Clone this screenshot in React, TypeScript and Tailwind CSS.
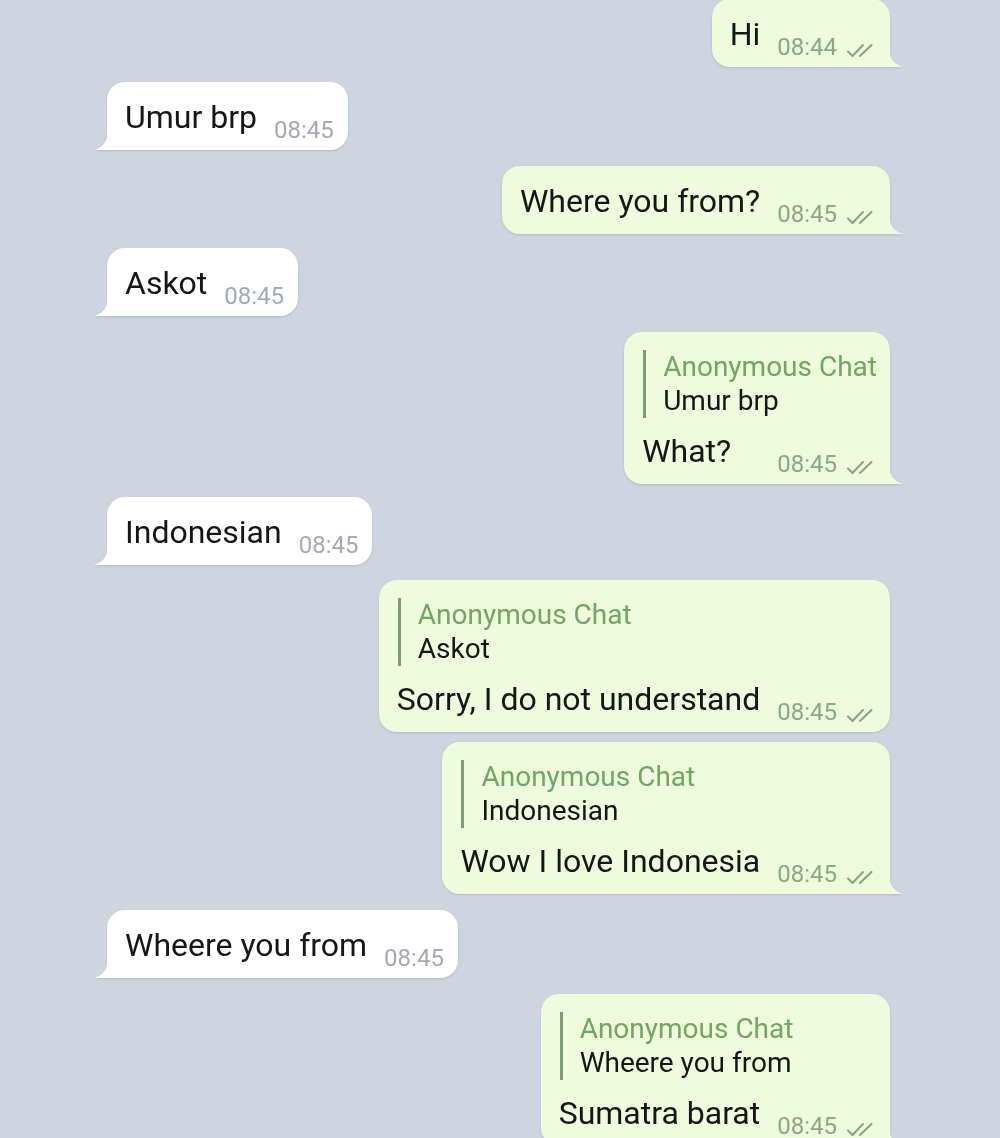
import React from 'react';

type Msg =
  | { id: number; out: boolean; text: string; time: string; mt: string; tail?: boolean; quote?: undefined }
  | { id: number; out: true; text: string; time: string; mt: string; tail?: boolean; quote: string };

const messages: Msg[] = [
  { id: 1, out: true, text: 'Hi', time: '08:44', mt: '-mt-[1px]' },
  { id: 2, out: false, text: 'Umur brp', time: '08:45', mt: 'mt-[15px]' },
  { id: 3, out: true, text: 'Where you from?', time: '08:45', mt: 'mt-[16px]' },
  { id: 4, out: false, text: 'Askot', time: '08:45', mt: 'mt-[14px]' },
  { id: 5, out: true, quote: 'Umur brp', text: 'What?', time: '08:45', mt: 'mt-[16px]' },
  { id: 6, out: false, text: 'Indonesian', time: '08:45', mt: 'mt-[13px]' },
  { id: 7, out: true, quote: 'Askot', text: 'Sorry, I do not understand', time: '08:45', mt: 'mt-[15px]', tail: false },
  { id: 8, out: true, quote: 'Indonesian', text: 'Wow I love Indonesia', time: '08:45', mt: 'mt-[10px]' },
  { id: 9, out: false, text: 'Wheere you from', time: '08:45', mt: 'mt-[16px]' },
  { id: 10, out: true, quote: 'Wheere you from', text: 'Sumatra barat', time: '08:45', mt: 'mt-[16px]' },
];

function Checks() {
  return (
    <svg width="31" height="16" viewBox="0 0 31 16" fill="none" stroke="#86a47f" strokeWidth="2" strokeLinecap="round" strokeLinejoin="round" className="ml-[9px] shrink-0">
      <path d="M2 8.5l4.5 4.5L17 2" />
      <path d="M14 13L25.5 2" />
    </svg>
  );
}

function Tail({ out }: { out: boolean }) {
  if (out) {
    return (
      <svg width="14" height="20" viewBox="0 0 14 20" className="absolute bottom-0 -right-[13px]">
        <path d="M0 0Q0 16 14 20H0Z" fill="#effbdd" />
      </svg>
    );
  }
  return (
    <svg width="14" height="20" viewBox="0 0 14 20" className="absolute bottom-0 -left-[13px]">
      <path d="M14 0Q14 16 0 20H14Z" fill="#ffffff" />
    </svg>
  );
}

function TimeStamp({ time, out }: { time: string; out: boolean }) {
  return (
    <div className="ml-[17px] flex shrink-0 translate-y-[10px] items-end">
      <span className={`text-[24px] leading-none ${out ? 'text-[#8aa883]' : 'text-[#a4aab1]'}`}>{time}</span>
      {out && <Checks />}
    </div>
  );
}

function Bubble({ msg }: { msg: Msg }) {
  const tail = msg.tail !== false;
  const corner = tail ? (msg.out ? 'rounded-br-none' : 'rounded-bl-none') : '';
  return (
    <div className={`relative w-fit rounded-[18px] ${corner} ${msg.out ? 'bg-[#effbdd]' : 'bg-white'} drop-shadow-[0_1px_1px_rgba(60,70,90,0.18)]`}>
      {tail && <Tail out={msg.out} />}
      {msg.quote ? (
        <div className="pl-[18px] pr-[13px] pt-[18px] pb-[14px]">
          <div className="ml-[1px] border-l-[3px] border-[#7f9c77] pl-[17px]">
            <div className="text-[28px] leading-[34px] text-[#72a566]">Anonymous Chat</div>
            <div className="text-[28px] leading-[34px] text-[#161616]">{msg.quote}</div>
          </div>
          <div className="mt-[14px] flex items-baseline justify-between">
            <span className="text-[32px] leading-[38px] text-[#161616]">{msg.text}</span>
            <TimeStamp time={msg.time} out={msg.out} />
          </div>
        </div>
      ) : (
        <div className={`flex items-baseline pl-[18px] pt-[16px] pb-[14px] ${msg.out ? 'pr-[13px]' : 'pr-[14px]'}`}>
          <span className="text-[32px] leading-[38px] text-[#161616]">{msg.text}</span>
          <TimeStamp time={msg.time} out={msg.out} />
        </div>
      )}
    </div>
  );
}

export default function App() {
  return (
    <div className="h-[1138px] w-[1000px] overflow-hidden bg-[#cfd5e0] font-['Roboto',sans-serif]">
      <div className="flex flex-col">
        {messages.map((m) => (
          <div key={m.id} className={`flex ${m.mt} ${m.out ? 'justify-end pr-[110px]' : 'justify-start pl-[107px]'}`}>
            <Bubble msg={m} />
          </div>
        ))}
      </div>
    </div>
  );
}
